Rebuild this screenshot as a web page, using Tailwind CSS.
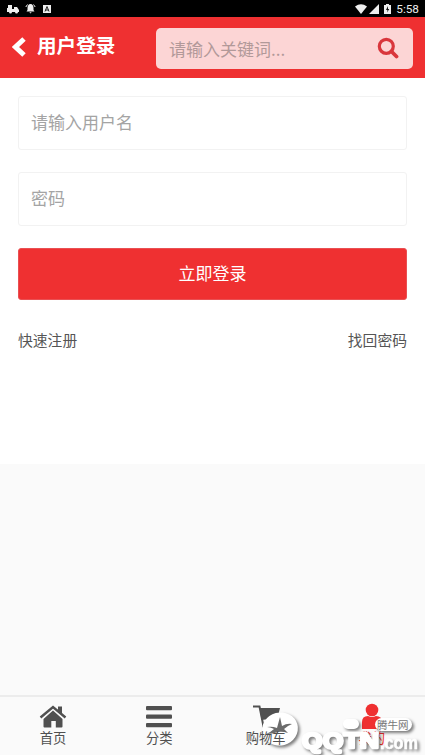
<!DOCTYPE html>
<html lang="zh-CN">
<head>
<meta charset="utf-8">
<meta name="viewport" content="width=device-width, initial-scale=1">
<title>用户登录</title>
<script src="https://cdn.jsdelivr.net/npm/@tailwindcss/browser@4"></script>
</head>
<body class="font-['Noto_Sans_CJK_SC',sans-serif] bg-[#fafafa]">
<div class="relative flex h-[755px] w-[425px] flex-col overflow-hidden">
  <!-- Status bar -->
  <div class="flex h-[17px] shrink-0 items-center justify-between bg-black pr-[6px] pl-[7px] text-[#eee]">
    <div class="flex items-center gap-[6px]">
      <svg class="h-[10px] w-[12px]" viewBox="0 0 12 10" fill="currentColor"><path d="M1 1h4v4h2V3h3l2 3v2h-1a1.500 1.500 0 0 1-3 0H5a1.500 1.500 0 0 1-3 0H0V4h1z"/></svg>
      <svg class="h-[11px] w-[11px]" viewBox="0 0 11 11" fill="currentColor"><path d="M5.500 1C7.500 1 8.500 3 8.500 5v2l1 1.500h-8L2.500 7V5c0-2 1-4 3-4zM4.300 9.200h2.400L5.500 10.500z"/><path d="M2.500 1.500 .8 4M8.500 1.500 10.200 4" stroke="currentColor" fill="none"/></svg>
      <svg class="ml-[1px] h-[8px] w-[8px]" viewBox="0 0 8 8"><path fill="currentColor" d="M0 0h8v8H0z"/><path d="M2 6.500 4 1.500l2 5M2.500 5h3" stroke="#222" fill="none"/></svg>
    </div>
    <div class="flex items-center">
      <svg class="h-[10px] w-[12px]" viewBox="0 0 12 10" fill="currentColor"><path d="M0 2.500Q6-2 12 2.500L6 10z"/></svg>
      <svg class="ml-[2px] h-[10px] w-[10px]" viewBox="0 0 10 10" fill="currentColor"><path d="M10 0v10H0z"/></svg>
      <svg class="ml-[5px] h-[10px] w-[7px]" viewBox="0 0 7 10"><path fill="currentColor" d="M2 0h3v1h2v9H0V1h2z"/><path d="M4 2 2 6h1.500L3 8.500 5.300 5H4z" fill="#111"/></svg>
      <span class="ml-[5px] pt-[1px] font-[Roboto,sans-serif] text-[11.800px] leading-[17px]">5:58</span>
    </div>
  </div>
  <!-- Header -->
  <header class="flex h-[61px] shrink-0 items-start bg-[#ef3031] pr-[12px] pl-[12px] text-white">
    <svg class="mt-[20px] h-[20px] w-[14px]" viewBox="0 0 14 20" fill="none" stroke="currentColor" stroke-width="5"><path d="M12 2 3.500 10 12 18"/></svg>
    <h1 class="mt-[14px] ml-[11px] w-[119px] text-[19.600px] leading-[28px] font-bold whitespace-nowrap">用户登录</h1>
    <div class="mt-[10.500px] flex h-[41px] flex-1 items-center justify-between rounded-[5px] bg-[#fcd5d5] pr-[14px] pl-[13px]">
      <span class="pt-[2px] text-[17px] leading-[24px] text-[#b29999]">请输入关键词...</span>
      <svg class="h-[22px] w-[22px]" viewBox="0 0 22 22" fill="none" stroke="#d9363c"><circle cx="9.300" cy="9.300" r="7" stroke-width="3.200"/><path d="m14.500 14.500 5 5" stroke-width="3.800" stroke-linecap="round"/></svg>
    </div>
  </header>
  <!-- Login form -->
  <main class="flex h-[386px] shrink-0 flex-col bg-white px-[18px] pt-[18px]">
    <div class="flex h-[54px] items-center rounded-[3px] border border-[#f2f2f2] pb-[2px] pl-[12px] text-[17px] text-[#a4a4a4]">请输入用户名</div>
    <div class="mt-[22px] flex h-[54px] items-center rounded-[3px] border border-[#f2f2f2] pb-[2px] pl-[12px] text-[17px] text-[#a4a4a4]">密码</div>
    <button class="mt-[22px] h-[52px] rounded-[3px] border border-[#e95053] bg-[#ef3031] pb-[2px] text-[17px] text-white">立即登录</button>
    <div class="mt-[29px] flex justify-between text-[14.800px] leading-[22px] text-[#555]"><span>快速注册</span><span>找回密码</span></div>
  </main>
  <!-- Tab bar -->
  <nav class="mt-auto grid h-[60px] shrink-0 grid-cols-4 border-t-2 border-[#ececec] bg-[#fafafa] text-[13.300px] leading-[18px] text-[#505050]">
    <div class="flex flex-col items-center pt-[8px]">
      <svg class="h-[23px] w-[28px]" viewBox="0 0 28 23" fill="currentColor"><path d="M14 5.500 23.500 14v7.500a1 1 0 0 1-1 1h-5.700V16h-4.500v6.500H5.500a1 1 0 0 1-1-1V14z"/><path d="M1.500 12.500 14 2l12.500 10.500" fill="none" stroke="currentColor" stroke-width="2.400"/><path d="M19 1.500h4V9l-4-3z"/></svg>
      <span class="mt-[1px]">首页</span>
    </div>
    <div class="flex flex-col items-center pt-[8px]">
      <svg class="h-[23px] w-[26px]" viewBox="0 0 26 23" fill="currentColor"><rect y="1" width="26" height="4.300" rx="1"/><rect y="9.500" width="26" height="4.300" rx="1"/><rect y="18" width="26" height="4.300" rx="1"/></svg>
      <span class="mt-[1px]">分类</span>
    </div>
    <div class="flex flex-col items-center pt-[8px]">
      <svg class="h-[23px] w-[28px]" viewBox="0 0 28 23" fill="currentColor"><path d="M1 1.500h6.500L11 19h13" fill="none" stroke="currentColor" stroke-width="2"/><path d="M7.500 3H28l-2.500 10-16 2z"/><circle cx="12" cy="21" r="2"/><circle cx="23" cy="21" r="2"/></svg>
      <span class="relative z-10 mt-[1px]">购物车</span>
    </div>
    <div class="flex flex-col items-center pt-[6px] text-[#ef3031]">
      <svg class="h-[26px] w-[22px]" viewBox="0 0 22 26" fill="currentColor"><circle cx="11" cy="7" r="6.300"/><path d="M1 26V19q0-6 6-6 4 2 8 0 6 0 6 6v7z"/></svg>
      <span>我的</span>
    </div>
  </nav>
  <!-- Watermark -->
  <svg class="absolute bottom-0 left-[255px] h-[55px] w-[170px] drop-shadow-[2px_2px_1.500px_rgb(0_0_0/0.5)]" viewBox="255 700 170 55">
    <ellipse cx="280" cy="729" rx="18" ry="16.500" fill="#fff" transform="rotate(-15 280 729)"/>
    <path d="M267 727q5-1 10 1l3-11 2 9q5-3 10-2-5 2-8 5l4 4q-6-2-10-1-5 2-12 2 5-2 8-5-4-2-7-2z" fill="#6b6b6b"/>
    <rect x="343" y="719" width="16" height="10" rx="5" fill="#fff"/>
    <rect x="375" y="718" width="37" height="13" rx="6.500" fill="#fff"/>
    <g font-family="Liberation Sans, sans-serif" font-weight="bold" fill="#fff" stroke="#fff" stroke-linejoin="round">
      <text x="302" y="748" font-size="22" textLength="77" lengthAdjust="spacingAndGlyphs" stroke-width="2.500">QQTN</text>
      <text x="380" y="749" font-size="18" textLength="38" lengthAdjust="spacingAndGlyphs" stroke-width=".5">.com</text>
    </g>
  </svg>
  <span class="absolute top-[718px] left-[377px] text-[10.500px] leading-[13px] whitespace-nowrap text-[#777]">腾牛网</span>
</div>
</body>
</html>
